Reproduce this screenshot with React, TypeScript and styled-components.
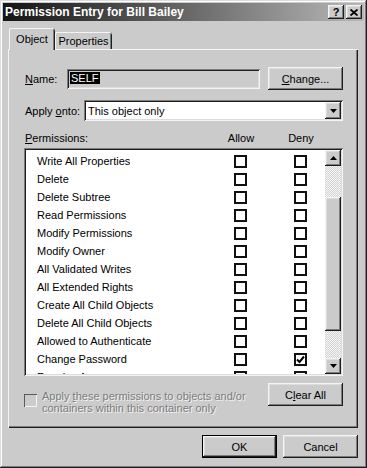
import React from "react";
import styled, { createGlobalStyle, css } from "styled-components";

const GlobalStyle = createGlobalStyle`
  html, body {
    margin: 0;
    padding: 0;
    background: #cbcbcb;
  }
  body {
    font-family: "Liberation Sans", Arial, sans-serif;
    font-size: 11px;
    color: #000;
  }
`;

const raised = css`
  background: #cbcbcb;
  box-shadow: inset -1px -1px #1e1e1e, inset 1px 1px #f4f4f4,
    inset -2px -2px #7c7c7c, inset 2px 2px #dcdcdc;
`;

const sunken = css`
  box-shadow: inset 1px 1px #7c7c7c, inset -1px -1px #f4f4f4,
    inset 2px 2px #1e1e1e, inset -2px -2px #dcdcdc;
`;

const Window = styled.div`
  width: 367px;
  height: 468px;
  box-sizing: border-box;
  padding: 3px;
  display: flex;
  flex-direction: column;
  background: #cbcbcb;
  box-shadow: inset -1px -1px #1e1e1e, inset 1px 1px #dcdcdc,
    inset -2px -2px #7c7c7c, inset 2px 2px #fff;
`;

const TitleBar = styled.div`
  height: 18px;
  display: flex;
  align-items: center;
  padding: 0 2px;
  background: linear-gradient(to right, #141414, #b8b8b8);
`;

const Title = styled.div`
  flex: 1;
  color: #fff;
  font-weight: bold;
  font-size: 12px;
`;

const TitleButton = styled.div`
  ${raised};
  width: 16px;
  height: 14px;
  margin-left: 2px;
  display: flex;
  align-items: center;
  justify-content: center;
  font-weight: bold;
  font-size: 11px;
  line-height: 14px;
`;

const Body = styled.div`
  flex: 1;
  display: flex;
  flex-direction: column;
  padding: 7px 6px 7px 5px;
`;

const TabRow = styled.div`
  height: 22px;
  margin-bottom: -1px;
  padding-left: 1px;
  display: flex;
  align-items: flex-end;
  position: relative;
  z-index: 1;
`;

const Tab = styled.div<{ $active?: boolean; $width: number }>`
  width: ${(p) => p.$width}px;
  height: ${(p) => (p.$active ? 22 : 17)}px;
  margin-bottom: ${(p) => (p.$active ? 0 : 1)}px;
  box-sizing: border-box;
  display: flex;
  align-items: center;
  justify-content: center;
  padding-bottom: ${(p) => (p.$active ? 1 : 0)}px;
  background: #cbcbcb;
  border-radius: 2px 2px 0 0;
  box-shadow: inset 1px 0 #f4f4f4, inset 0 1px #f4f4f4, inset -1px 0 #1e1e1e,
    inset -2px 0 #7c7c7c;
`;

const Panel = styled.div`
  flex: 1;
  display: flex;
  flex-direction: column;
  padding: 18px 15px 0 16px;
  box-shadow: inset 1px 1px #f4f4f4, inset -1px -1px #1e1e1e,
    inset -2px -2px #7c7c7c;
`;

const FieldRow = styled.div<{ $height: number; $top?: number }>`
  height: ${(p) => p.$height}px;
  margin-top: ${(p) => p.$top ?? 0}px;
  display: flex;
  align-items: center;
`;

const Label = styled.div<{ $width: number }>`
  width: ${(p) => p.$width}px;
  padding-left: 1px;
  box-sizing: border-box;
  white-space: nowrap;
`;

const TextBox = styled.div`
  ${sunken};
  width: 193px;
  height: 20px;
  box-sizing: border-box;
  padding: 3px 2px 0 3px;
  background: #cbcbcb;
`;

const Selection = styled.span`
  background: #000;
  color: #fff;
  padding: 0 1px;
`;

const Button = styled.div<{ $default?: boolean }>`
  ${raised};
  width: 75px;
  height: 23px;
  box-sizing: border-box;
  display: flex;
  align-items: center;
  justify-content: center;
  ${(p) =>
    p.$default &&
    css`
      border: 1px solid #000;
    `}
`;

const Spacer = styled.div<{ $width: number }>`
  width: ${(p) => p.$width}px;
`;

const Combo = styled.div`
  ${sunken};
  flex: 1;
  height: 21px;
  box-sizing: border-box;
  padding: 2px;
  display: flex;
  align-items: center;
  background: #fff;
`;

const ComboText = styled.div`
  flex: 1;
  padding-left: 2px;
`;

const ArrowButton = styled.div<{ $h: number }>`
  ${raised};
  width: 16px;
  height: ${(p) => p.$h}px;
  display: flex;
  align-items: center;
  justify-content: center;
`;

const PermHeader = styled.div`
  height: 13px;
  margin-top: 10px;
  display: flex;
  align-items: center;
  padding-left: 1px;
  padding-right: 12px;
`;

const HeaderCell = styled.div<{ $width?: number }>`
  ${(p) =>
    p.$width
      ? css`
          width: ${p.$width}px;
          text-align: center;
        `
      : css`
          flex: 1;
        `}
`;

const ListBox = styled.div`
  ${sunken};
  height: 228px;
  margin-top: 4px;
  box-sizing: border-box;
  padding: 2px;
  display: flex;
  background: #fff;
`;

const Rows = styled.div`
  flex: 1;
  overflow: hidden;
  padding-top: 2px;
`;

const Row = styled.div`
  height: 18px;
  display: grid;
  grid-template-columns: 1fr 13px 13px;
  column-gap: 47px;
  align-items: center;
  padding: 0 18px 0 11px;
  white-space: nowrap;
`;

const Check = styled.div`
  width: 13px;
  height: 13px;
  box-sizing: border-box;
  border: 2px solid #111;
  background: #fff;
  display: flex;
  align-items: center;
  justify-content: center;
`;

const ScrollBar = styled.div`
  width: 16px;
  display: flex;
  flex-direction: column;
`;

const Track = styled.div`
  flex: 1;
  background: repeating-conic-gradient(#f4f4f4 0 25%, #d4d4d4 0 50%) 0 0 / 2px
    2px;
`;

const Thumb = styled.div<{ $top: number; $height: number }>`
  ${raised};
  margin-top: ${(p) => p.$top}px;
  height: ${(p) => p.$height}px;
`;

const BottomRow = styled.div`
  margin-top: 7px;
  display: flex;
  justify-content: space-between;
  align-items: flex-start;
`;

const Option = styled.div`
  margin-top: 7px;
  display: flex;
  align-items: flex-start;
`;

const DisabledBox = styled.div`
  width: 13px;
  height: 13px;
  margin-top: 4px;
  box-sizing: border-box;
  background: #cbcbcb;
  box-shadow: inset 1px 1px #5a5a5a, inset -1px -1px #f4f4f4;
`;

const DisabledText = styled.div`
  margin-left: 5px;
  line-height: 12px;
  color: #7c7c7c;
  text-shadow: 1px 1px #f4f4f4;
`;

const Footer = styled.div`
  margin-top: 7px;
  display: flex;
  justify-content: flex-end;
  gap: 6px;
`;

const permissions: [string, boolean, boolean][] = [
  ["Write All Properties", false, false],
  ["Delete", false, false],
  ["Delete Subtree", false, false],
  ["Read Permissions", false, false],
  ["Modify Permissions", false, false],
  ["Modify Owner", false, false],
  ["All Validated Writes", false, false],
  ["All Extended Rights", false, false],
  ["Create All Child Objects", false, false],
  ["Delete All Child Objects", false, false],
  ["Allowed to Authenticate", false, false],
  ["Change Password", false, true],
  ["Receive As", false, false],
];

const Tick = () => (
  <svg width="9" height="9" viewBox="0 0 9 9">
    <polyline
      points="1,4.5 3.5,7 8,1.5"
      fill="none"
      stroke="#000"
      strokeWidth="2"
    />
  </svg>
);

const Triangle = ({ down }: { down?: boolean }) => (
  <svg width="7" height="4" viewBox="0 0 7 4">
    <polygon points={down ? "0,0 7,0 3.5,4" : "0,4 7,4 3.5,0"} fill="#000" />
  </svg>
);

const CheckBox = ({ checked }: { checked: boolean }) => (
  <Check>{checked && <Tick />}</Check>
);

export default function App() {
  return (
    <>
      <GlobalStyle />
      <Window>
        <TitleBar>
          <Title>Permission Entry for Bill Bailey</Title>
          <TitleButton>?</TitleButton>
          <TitleButton>
            <svg width="8" height="7" viewBox="0 0 8 7">
              <path d="M0.5 0.5 L7.5 6.5 M7.5 0.5 L0.5 6.5" stroke="#000" strokeWidth="1.8" />
            </svg>
          </TitleButton>
        </TitleBar>

        <Body>
          <TabRow>
            <Tab $active $width={46}>Object</Tab>
            <Tab $width={57}>Properties</Tab>
          </TabRow>

          <Panel>
            <FieldRow $height={23}>
              <Label $width={43}>
                <u>N</u>ame:
              </Label>
              <TextBox>
                <Selection>SELF</Selection>
              </TextBox>
              <Spacer $width={8} />
              <Button>
                <span>
                  <u>C</u>hange...
                </span>
              </Button>
            </FieldRow>

            <FieldRow $height={21} $top={10}>
              <Label $width={60}>
                Apply <u>o</u>nto:
              </Label>
              <Combo>
                <ComboText>This object only</ComboText>
                <ArrowButton $h={17}>
                  <Triangle down />
                </ArrowButton>
              </Combo>
            </FieldRow>

            <PermHeader>
              <HeaderCell>
                <u>P</u>ermissions:
              </HeaderCell>
              <HeaderCell $width={60}>Allow</HeaderCell>
              <HeaderCell $width={60}>Deny</HeaderCell>
            </PermHeader>

            <ListBox>
              <Rows>
                {permissions.map(([name, allow, deny]) => (
                  <Row key={name}>
                    <span>{name}</span>
                    <CheckBox checked={allow} />
                    <CheckBox checked={deny} />
                  </Row>
                ))}
              </Rows>
              <ScrollBar>
                <ArrowButton $h={16}>
                  <Triangle />
                </ArrowButton>
                <Track>
                  <Thumb $top={31} $height={134} />
                </Track>
                <ArrowButton $h={16}>
                  <Triangle down />
                </ArrowButton>
              </ScrollBar>
            </ListBox>

            <BottomRow>
              <Option>
                <DisabledBox />
                <DisabledText>
                  Apply <u>t</u>hese permissions to objects and/or
                  <br />
                  containers within this container only
                </DisabledText>
              </Option>
              <Button>
                <span>
                  C<u>l</u>ear All
                </span>
              </Button>
            </BottomRow>
          </Panel>

          <Footer>
            <Button $default>OK</Button>
            <Button>Cancel</Button>
          </Footer>
        </Body>
      </Window>
    </>
  );
}
